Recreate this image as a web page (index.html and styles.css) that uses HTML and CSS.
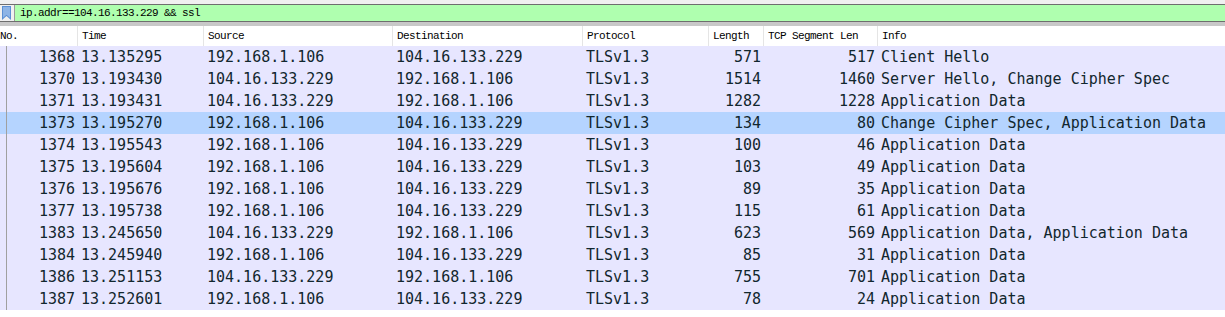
FILE: index.html
```html
<!DOCTYPE html>
<html>
<head>
<meta charset="utf-8">
<link rel="stylesheet" href="styles.css">
</head>
<body>
<div class="app">
  <div class="toolbar">
    <div class="filter">
      <div class="bm">
        <svg width="9" height="14" viewBox="0 0 9 14"><path d="M0 0H9V14L4.5 10L0 14Z" fill="#5b8fd4"/><path d="M1 1H8V11.8L4.5 8.8L1 11.8Z" fill="#8db4e6"/></svg>
      </div>
      <div class="ftext">ip.addr==104.16.133.229 &amp;&amp; ssl</div>
    </div>
  </div>
  <div class="grid head">
    <div class="h">No.</div>
    <div class="h">Time</div>
    <div class="h">Source</div>
    <div class="h">Destination</div>
    <div class="h">Protocol</div>
    <div class="h">Length</div>
    <div class="h">TCP Segment Len</div>
    <div class="h">Info</div>
  </div>
  <div class="rows">
    <div class="grid row"><div class="c r">1368</div><div class="c">13.135295</div><div class="c">192.168.1.106</div><div class="c">104.16.133.229</div><div class="c">TLSv1.3</div><div class="c r">571</div><div class="c r">517</div><div class="c">Client Hello</div></div>
    <div class="grid row"><div class="c r">1370</div><div class="c">13.193430</div><div class="c">104.16.133.229</div><div class="c">192.168.1.106</div><div class="c">TLSv1.3</div><div class="c r">1514</div><div class="c r">1460</div><div class="c">Server Hello, Change Cipher Spec</div></div>
    <div class="grid row"><div class="c r">1371</div><div class="c">13.193431</div><div class="c">104.16.133.229</div><div class="c">192.168.1.106</div><div class="c">TLSv1.3</div><div class="c r">1282</div><div class="c r">1228</div><div class="c">Application Data</div></div>
    <div class="grid row sel"><div class="c r">1373</div><div class="c">13.195270</div><div class="c">192.168.1.106</div><div class="c">104.16.133.229</div><div class="c">TLSv1.3</div><div class="c r">134</div><div class="c r">80</div><div class="c">Change Cipher Spec, Application Data</div></div>
    <div class="grid row"><div class="c r">1374</div><div class="c">13.195543</div><div class="c">192.168.1.106</div><div class="c">104.16.133.229</div><div class="c">TLSv1.3</div><div class="c r">100</div><div class="c r">46</div><div class="c">Application Data</div></div>
    <div class="grid row"><div class="c r">1375</div><div class="c">13.195604</div><div class="c">192.168.1.106</div><div class="c">104.16.133.229</div><div class="c">TLSv1.3</div><div class="c r">103</div><div class="c r">49</div><div class="c">Application Data</div></div>
    <div class="grid row"><div class="c r">1376</div><div class="c">13.195676</div><div class="c">192.168.1.106</div><div class="c">104.16.133.229</div><div class="c">TLSv1.3</div><div class="c r">89</div><div class="c r">35</div><div class="c">Application Data</div></div>
    <div class="grid row"><div class="c r">1377</div><div class="c">13.195738</div><div class="c">192.168.1.106</div><div class="c">104.16.133.229</div><div class="c">TLSv1.3</div><div class="c r">115</div><div class="c r">61</div><div class="c">Application Data</div></div>
    <div class="grid row"><div class="c r">1383</div><div class="c">13.245650</div><div class="c">104.16.133.229</div><div class="c">192.168.1.106</div><div class="c">TLSv1.3</div><div class="c r">623</div><div class="c r">569</div><div class="c">Application Data, Application Data</div></div>
    <div class="grid row"><div class="c r">1384</div><div class="c">13.245940</div><div class="c">192.168.1.106</div><div class="c">104.16.133.229</div><div class="c">TLSv1.3</div><div class="c r">85</div><div class="c r">31</div><div class="c">Application Data</div></div>
    <div class="grid row"><div class="c r">1386</div><div class="c">13.251153</div><div class="c">104.16.133.229</div><div class="c">192.168.1.106</div><div class="c">TLSv1.3</div><div class="c r">755</div><div class="c r">701</div><div class="c">Application Data</div></div>
    <div class="grid row"><div class="c r">1387</div><div class="c">13.252601</div><div class="c">192.168.1.106</div><div class="c">104.16.133.229</div><div class="c">TLSv1.3</div><div class="c r">78</div><div class="c r">24</div><div class="c">Application Data</div></div>
    <div class="relline"></div>
  </div>
</div>
</body>
</html>
```
FILE: styles.css
```css
html, body { margin: 0; padding: 0; background: #ffffff; }
.app { width: 1225px; height: 317px; overflow: hidden; background: #fff; }
.toolbar {
  background: #f0f0f0;
  padding-top: 4px;
  border-bottom: 4px solid #c8c8c8;
  box-shadow: inset 0 -0px 0 #fff;
}
.filter {
  display: flex;
  height: 16px;
  border-top: 1px solid #6e6e6e;
  border-bottom: 1px solid #6e6e6e;
  background: #afffaf;
}
.bm {
  width: 15px;
  background: #f0f0f0;
  border-right: 1px solid #9a9a9a;
  display: flex;
  align-items: center;
  justify-content: center;
  box-sizing: border-box;
  padding-right: 2px;
}
.ftext {
  font-family: "Liberation Mono", monospace;
  font-size: 11px;
  letter-spacing: -0.6px;
  line-height: 16px;
  padding-left: 5px;
  color: #000;
}
.grid {
  display: grid;
  grid-template-columns: 78px 126px 189px 190px 126px 55px 114px 1fr;
}
.head { height: 20px; background: #fff; }
.h {
  font-family: "Liberation Mono", monospace;
  font-size: 11px;
  letter-spacing: -0.6px;
  line-height: 20px;
  padding-left: 4px;
  border-right: 1px solid #e5e5e5;
  color: #000;
  white-space: nowrap;
}
.h:first-child { padding-left: 0; }
.h:last-child { border-right: none; }
.rows { position: relative; }
.row {
  height: 22px;
  background: #e7e6ff;
  color: #12272e;
  font-family: "DejaVu Sans Mono", monospace;
  font-size: 15px;
  line-height: 22px;
}
.row.sel { background: #b5d4ff; }
.c { padding-left: 3px; white-space: nowrap; overflow: hidden; }
.c.r { text-align: right; padding-left: 0; padding-right: 3px; }
.relline {
  position: absolute;
  left: 6px;
  top: 0;
  bottom: 0;
  width: 1px;
  background: #a0a0a0;
}
```
